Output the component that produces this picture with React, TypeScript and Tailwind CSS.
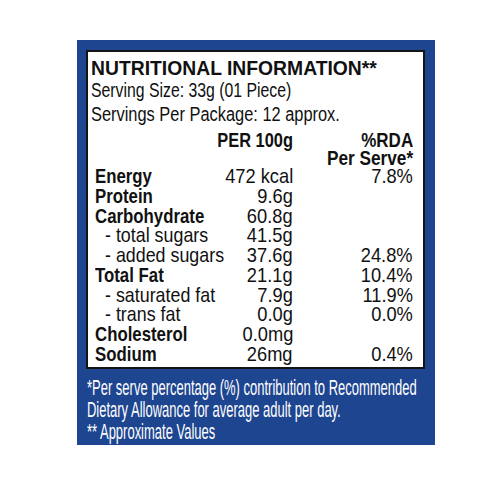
import React from "react";

const rows: { label: string; bold?: boolean; sub?: boolean; val: string; pct?: string }[] = [
  { label: "Energy", bold: true, val: "472 kcal", pct: "7.8%" },
  { label: "Protein", bold: true, val: "9.6g" },
  { label: "Carbohydrate", bold: true, val: "60.8g" },
  { label: "- total sugars", sub: true, val: "41.5g" },
  { label: "- added sugars", sub: true, val: "37.6g", pct: "24.8%" },
  { label: "Total Fat", bold: true, val: "21.1g", pct: "10.4%" },
  { label: "- saturated fat", sub: true, val: "7.9g", pct: "11.9%" },
  { label: "- trans fat", sub: true, val: "0.0g", pct: "0.0%" },
  { label: "Cholesterol", bold: true, val: "0.0mg" },
  { label: "Sodium", bold: true, val: "26mg", pct: "0.4%" },
];

function L({ children, className }: { children: React.ReactNode; className: string }) {
  return <span className={"inline-block whitespace-nowrap origin-left " + className}>{children}</span>;
}
function R({ children, className }: { children: React.ReactNode; className: string }) {
  return <span className={"inline-block whitespace-nowrap origin-right shrink-0 " + className}>{children}</span>;
}

export default function App() {
  return (
    <div
      className="w-[500px] h-[500px] overflow-hidden bg-white pt-[40px] pl-[77px]"
      style={{ fontFamily: '"Liberation Sans", Arial, sans-serif' }}
    >
      <div className="w-[358px] h-[405px] bg-[#1e4590] pt-[10px] pl-[9px]">
        <div className="w-[339px] h-[319px] bg-white border-2 border-[#141414] pl-[3px] pt-[5px] text-[#111]">
          <div className="text-[21px] leading-[22px] font-bold">
            <L className="scale-x-[0.92]">NUTRITIONAL INFORMATION**</L>
          </div>
          <div className="text-[20px] leading-[20px] mt-[1px]">
            <L className="scale-x-[0.79]">Serving Size: 33g (01 Piece)</L>
          </div>
          <div className="text-[20px] leading-[20px] mt-[4px]">
            <L className="scale-x-[0.82]">Servings Per Package: 12 approx.</L>
          </div>
          <div className="ml-[4px] grid grid-cols-[130px_68px_120px] text-[21px] leading-[18px] font-bold mt-[7px]">
            <div />
            <div className="flex justify-end">
              <R className="scale-x-[0.78]">PER 100g</R>
            </div>
            <div className="flex flex-col items-end">
              <R className="scale-x-[0.81]">%RDA</R>
              <R className="scale-x-[0.82]">Per Serve*</R>
            </div>
          </div>
          <div className="ml-[4px] mt-[-1px]">
            {rows.map((r) => (
              <div key={r.label} className="grid grid-cols-[130px_68px_120px] text-[21px] leading-[19.75px]">
                <div className={r.bold ? "font-bold" : "pl-[10px]"}>
                  {r.bold ? (
                    <L className="scale-x-[0.8]">{r.label}</L>
                  ) : (
                    <L className="scale-x-[0.85]">{r.label}</L>
                  )}
                </div>
                <div className="flex justify-end">
                  <R className="scale-x-[0.87]">{r.val}</R>
                </div>
                <div className="flex justify-end">
                  {r.pct ? <R className="scale-x-[0.87]">{r.pct}</R> : null}
                </div>
              </div>
            ))}
          </div>
        </div>
        <div className="text-white text-[22px] leading-[22px] mt-[8px] pl-[1px]">
          <div>
            <L className="scale-x-[0.59]">*Per serve percentage (%) contribution to Recommended</L>
          </div>
          <div>
            <L className="scale-x-[0.59]">Dietary Allowance for average adult per day.</L>
          </div>
          <div>
            <L className="scale-x-[0.59]">** Approximate Values</L>
          </div>
        </div>
      </div>
    </div>
  );
}
